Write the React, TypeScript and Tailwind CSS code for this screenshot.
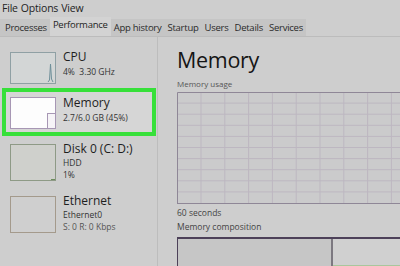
import React from "react";

const TABS = ["Processes", "Performance", "App history", "Startup", "Users", "Details", "Services"];

function Thumb({ kind }: { kind: string }) {
  if (kind === "cpu") {
    return (
      <svg width="46" height="32" className="block">
        <rect x="0.5" y="0.5" width="45" height="31" fill="#d3d6d6" stroke="#8fa0a4" />
        <path d="M38 30 L39.5 28 L40.5 12 L41.5 27 L43 30" fill="none" stroke="#6e8f99" strokeWidth="1" />
      </svg>
    );
  }
  if (kind === "mem") {
    return (
      <svg width="46" height="32" className="block">
        <rect x="0.5" y="0.5" width="45" height="31" fill="#fdfdfd" stroke="#a797b4" />
        <rect x="37.5" y="16.5" width="8" height="15" fill="#f6f4f7" stroke="#a797b4" />
      </svg>
    );
  }
  if (kind === "disk") {
    return (
      <svg width="46" height="37" className="block">
        <rect x="0.5" y="0.5" width="45" height="36" fill="#cfd0cc" stroke="#8e9a86" />
        <path d="M41 35.5 L45 35.5" stroke="#6c8c5c" />
      </svg>
    );
  }
  return (
    <svg width="46" height="37" className="block">
      <rect x="0.5" y="0.5" width="45" height="36" fill="#cfcfcf" stroke="#a49a8c" />
    </svg>
  );
}

function Grid() {
  const cols = Array.from({ length: 10 }, (_, i) => 24 + i * 23.8);
  const rows = Array.from({ length: 9 }, (_, i) => 11.1 + i * 11.1);
  return (
    <svg width="230" height="112" className="block">
      <rect x="0" y="0" width="230" height="112" fill="#cbcbcc" />
      {cols.map((x) => (
        <line key={"c" + x} x1={x} y1="0" x2={x} y2="112" stroke="#bdb7c1" strokeWidth="1" />
      ))}
      {rows.map((y) => (
        <line key={"r" + y} x1="0" y1={y} x2="230" y2={y} stroke="#bdb7c1" strokeWidth="1" />
      ))}
      <path d="M0.5 112 L0.5 0.5 L230 0.5" fill="none" stroke="#8f8797" />
      <line x1="0" y1="111.5" x2="230" y2="111.5" stroke="#8f8797" />
    </svg>
  );
}

export default function App() {
  return (
    <div
      className="w-[400px] h-[266px] overflow-hidden bg-[#cecece] text-[#1e1e1e] flex flex-col"
      style={{ fontFamily: '"Open Sans", "Noto Sans", sans-serif' }}
    >
      <div className="h-[18px] flex items-center gap-[3px] pl-[2px] text-[10.5px] tracking-[-0.2px]">
        <span>File</span>
        <span>Options</span>
        <span>View</span>
      </div>
      <div className="h-[19px] flex items-end border-b border-[#bcbcbc]">
        <div className="flex items-end bg-[#c5c5c5] pl-[2px] h-[17px]">
          {TABS.map((t) => (
            <div
              key={t}
              className={
                t === "Performance"
                  ? "h-[19px] px-[3px] bg-[#d3d3d3] flex items-start pt-[1px] text-[9.5px] tracking-[-0.25px]"
                  : "h-[17px] px-[3px] flex items-center pt-[1px] text-[9.5px] tracking-[-0.25px] text-[#2a2a2a]"
              }
            >
              {t}
            </div>
          ))}
        </div>
      </div>
      <div className="flex flex-1 min-h-0">
        <div className="w-[158px] shrink-0 border-r border-[#bdbdbd] pt-[15px]">
          <div className="flex pl-[10px] h-[32px]">
            <Thumb kind="cpu" />
            <div className="pl-[7px] leading-none">
              <div className="text-[12px] mt-[-1px]">CPU</div>
              <div className="text-[8.5px] mt-[5px] text-[#333]">4%&nbsp; 3.30 GHz</div>
            </div>
          </div>
          <div className="mt-[4px] ml-[2px] mr-[1px] h-[48px] border-[4px] border-[#37e03a] bg-[#d6d6d6] flex pl-[4px] pt-[5px]">
            <Thumb kind="mem" />
            <div className="pl-[7px] leading-none">
              <div className="text-[12px] mt-[0px]">Memory</div>
              <div className="text-[8.5px] mt-[5px] text-[#333]">2.7/6.0 GB (45%)</div>
            </div>
          </div>
          <div className="flex pl-[10px] mt-[8px] h-[37px]">
            <Thumb kind="disk" />
            <div className="pl-[7px] leading-none">
              <div className="text-[12px] mt-[-1px]">Disk 0 (C: D:)</div>
              <div className="text-[8.5px] mt-[4px] text-[#333]">HDD</div>
              <div className="text-[8.5px] mt-[3px] text-[#333]">1%</div>
            </div>
          </div>
          <div className="flex pl-[10px] mt-[15px] h-[37px]">
            <Thumb kind="eth" />
            <div className="pl-[7px] leading-none">
              <div className="text-[12px] mt-[-1px]">Ethernet</div>
              <div className="text-[8.5px] mt-[4px] text-[#333]">Ethernet0</div>
              <div className="text-[8.5px] mt-[3px] text-[#555]">S: 0 R: 0 Kbps</div>
            </div>
          </div>
        </div>
        <div className="flex-1 min-w-0 pl-[19px] pt-[12px] overflow-hidden">
          <div className="text-[21.5px] leading-none tracking-[-0.3px] text-[#151515]">Memory</div>
          <div className="text-[8px] mt-[9px] leading-none text-[#555]">Memory usage</div>
          <div className="mt-[4px]">
            <Grid />
          </div>
          <div className="text-[8.5px] mt-[5px] leading-none text-[#444]">60 seconds</div>
          <div className="text-[8.5px] mt-[6px] leading-none text-[#444]">Memory composition</div>
          <div className="mt-[5px] h-[40px] flex border-t-[2px] border-l border-[#4d4159]">
            <div className="w-[155px] bg-[#c6c6c6] border-r-[2px] border-[#7c7880]" />
            <div className="flex-1 bg-[#d0d0d0] flex flex-col justify-end">
              <div className="h-[3px] mt-[26px] bg-[#a9c79d]" />
              <div className="flex-1" />
            </div>
          </div>
        </div>
      </div>
    </div>
  );
}
